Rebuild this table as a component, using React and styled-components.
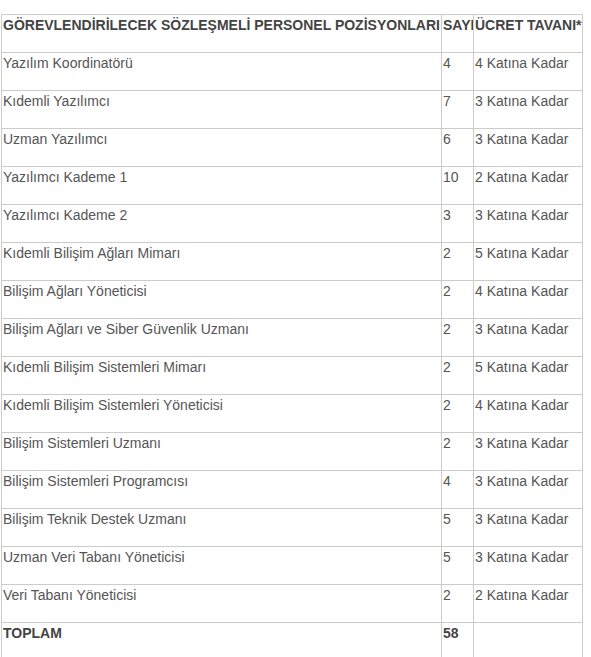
import React from "react";
import styled, { createGlobalStyle } from "styled-components";

const rows = [
  ["Yazılım Koordinatörü", "4", "4 Katına Kadar"],
  ["Kıdemli Yazılımcı", "7", "3 Katına Kadar"],
  ["Uzman Yazılımcı", "6", "3 Katına Kadar"],
  ["Yazılımcı Kademe 1", "10", "2 Katına Kadar"],
  ["Yazılımcı Kademe 2", "3", "3 Katına Kadar"],
  ["Kıdemli Bilişim Ağları Mimarı", "2", "5 Katına Kadar"],
  ["Bilişim Ağları Yöneticisi", "2", "4 Katına Kadar"],
  ["Bilişim Ağları ve Siber Güvenlik Uzmanı", "2", "3 Katına Kadar"],
  ["Kıdemli Bilişim Sistemleri Mimarı", "2", "5 Katına Kadar"],
  ["Kıdemli Bilişim Sistemleri Yöneticisi", "2", "4 Katına Kadar"],
  ["Bilişim Sistemleri Uzmanı", "2", "3 Katına Kadar"],
  ["Bilişim Sistemleri Programcısı", "4", "3 Katına Kadar"],
  ["Bilişim Teknik Destek Uzmanı", "5", "3 Katına Kadar"],
  ["Uzman Veri Tabanı Yöneticisi", "5", "3 Katına Kadar"],
  ["Veri Tabanı Yöneticisi", "2", "2 Katına Kadar"],
];

function App() {
  return (
    <>
      <GlobalStyle />
      <Page>
        <Table>
          <colgroup>
            <col style={{ width: 440 }} />
            <col style={{ width: 32 }} />
            <col style={{ width: 109 }} />
          </colgroup>
          <tbody>
            <Row>
              <Cell bold>GÖREVLENDİRİLECEK SÖZLEŞMELİ PERSONEL POZİSYONLARI</Cell>
              <Cell bold>SAYI</Cell>
              <Cell bold>ÜCRET TAVANI*</Cell>
            </Row>
            {rows.map(([name, count, cap]) => (
              <Row key={name}>
                <Cell>{name}</Cell>
                <Cell>{count}</Cell>
                <Cell>{cap}</Cell>
              </Row>
            ))}
            <Row>
              <Cell bold>TOPLAM</Cell>
              <Cell bold>58</Cell>
              <Cell />
            </Row>
          </tbody>
        </Table>
      </Page>
    </>
  );
}

export default App;

const GlobalStyle = createGlobalStyle`
  body {
    margin: 0;
    background: #fff;
    font-family: "Liberation Sans", Arial, sans-serif;
  }
`;

const Page = styled.div`
  padding: 14px 0 0 1px;
`;

const Table = styled.table`
  border-collapse: collapse;
  table-layout: fixed;
  width: 581px;
  font-size: 14px;
  color: #555;
`;

const Row = styled.tr`
  height: 38px;
`;

const Cell = styled.td`
  border: 1px solid #ccc;
  padding: 0 1px;
  line-height: 20px;
  vertical-align: top;
  white-space: nowrap;
  overflow: hidden;
  font-weight: ${(p) => (p.bold ? 700 : 400)};
  color: ${(p) => (p.bold ? "#444" : "#555")};
`;
